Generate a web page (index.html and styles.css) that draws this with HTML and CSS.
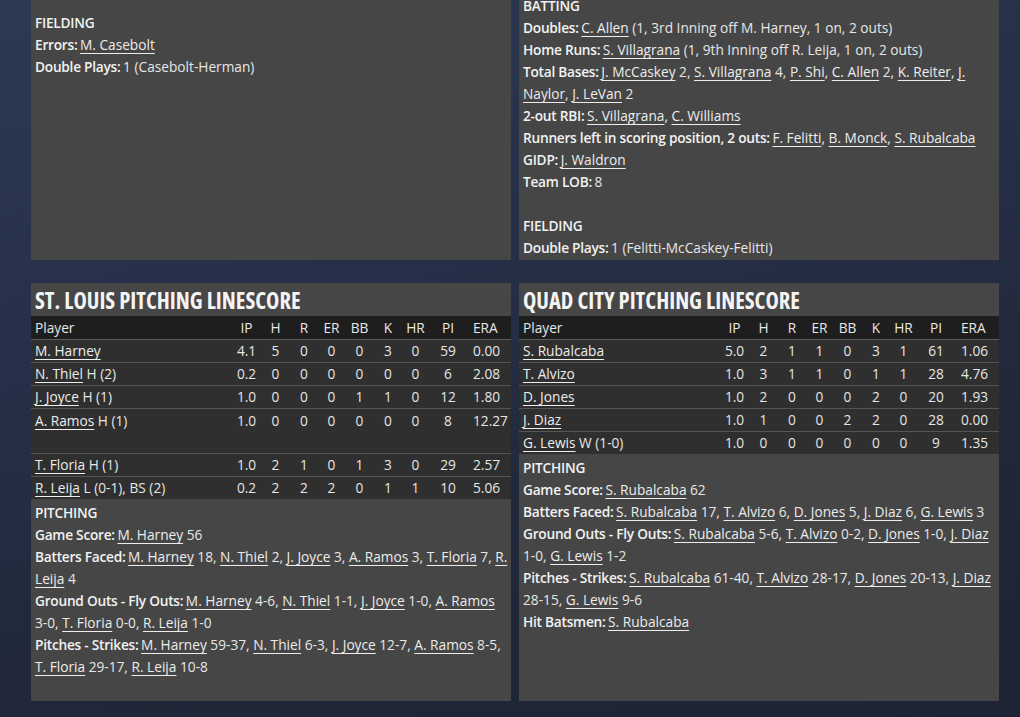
FILE: index.html
```html
<!DOCTYPE html>
<html>
<head>
<meta charset="utf-8">
<link rel="stylesheet" href="styles.css">
</head>
<body>
<div class="page">
  <div class="row top-row">
    <div class="panel text-panel left-top">
      <div class="sec-title">FIELDING</div>
      <div class="line"><b>Errors:</b> <a>M. Casebolt</a></div>
      <div class="line"><b>Double Plays:</b> 1 (Casebolt-Herman)</div>
    </div>
    <div class="panel text-panel right-top">
      <div class="sec-title">BATTING</div>
      <div class="line"><b>Doubles:</b> <a>C. Allen</a> (1, 3rd Inning off M. Harney, 1 on, 2 outs)</div>
      <div class="line"><b>Home Runs:</b> <a>S. Villagrana</a> (1, 9th Inning off R. Leija, 1 on, 2 outs)</div>
      <div class="line"><b>Total Bases:</b> <a>J. McCaskey</a> 2, <a>S. Villagrana</a> 4, <a>P. Shi</a>, <a>C. Allen</a> 2, <a>K. Reiter</a>, <a>J.<br>Naylor</a>, <a>J. LeVan</a> 2</div>
      <div class="line"><b>2-out RBI:</b> <a>S. Villagrana</a>, <a>C. Williams</a></div>
      <div class="line"><b>Runners left in scoring position, 2 outs:</b> <a>F. Felitti</a>, <a>B. Monck</a>, <a>S. Rubalcaba</a></div>
      <div class="line"><b>GIDP:</b> <a>J. Waldron</a></div>
      <div class="line"><b>Team LOB:</b> 8</div>
      <div class="blank"></div>
      <div class="sec-title">FIELDING</div>
      <div class="line"><b>Double Plays:</b> 1 (Felitti-McCaskey-Felitti)</div>
    </div>
  </div>

  <div class="row bottom-row">
    <div class="panel">
      <div class="panel-title">ST. LOUIS PITCHING LINESCORE</div>
      <table class="score">
        <thead>
          <tr><th class="player">Player</th><th>IP</th><th>H</th><th>R</th><th>ER</th><th>BB</th><th>K</th><th>HR</th><th>PI</th><th class="era">ERA</th></tr>
        </thead>
        <tbody>
          <tr><td class="player"><a>M. Harney</a></td><td>4.1</td><td>5</td><td>0</td><td>0</td><td>0</td><td>3</td><td>0</td><td>59</td><td class="era">0.00</td></tr>
          <tr><td class="player"><a>N. Thiel</a> H (2)</td><td>0.2</td><td>0</td><td>0</td><td>0</td><td>0</td><td>0</td><td>0</td><td>6</td><td class="era">2.08</td></tr>
          <tr><td class="player"><a>J. Joyce</a> H (1)</td><td>1.0</td><td>0</td><td>0</td><td>0</td><td>1</td><td>1</td><td>0</td><td>12</td><td class="era">1.80</td></tr>
          <tr class="tall"><td class="player"><a>A. Ramos</a> H (1)</td><td>1.0</td><td>0</td><td>0</td><td>0</td><td>0</td><td>0</td><td>0</td><td>8</td><td class="era">12.27</td></tr>
          <tr><td class="player"><a>T. Floria</a> H (1)</td><td>1.0</td><td>2</td><td>1</td><td>0</td><td>1</td><td>3</td><td>0</td><td>29</td><td class="era">2.57</td></tr>
          <tr><td class="player"><a>R. Leija</a> L (0-1), BS (2)</td><td>0.2</td><td>2</td><td>2</td><td>2</td><td>0</td><td>1</td><td>1</td><td>10</td><td class="era">5.06</td></tr>
        </tbody>
      </table>
      <div class="text-panel notes">
        <div class="sec-title">PITCHING</div>
        <div class="line"><b>Game Score:</b> <a>M. Harney</a> 56</div>
        <div class="line"><b>Batters Faced:</b> <a>M. Harney</a> 18, <a>N. Thiel</a> 2, <a>J. Joyce</a> 3, <a>A. Ramos</a> 3, <a>T. Floria</a> 7, <a>R.<br>Leija</a> 4</div>
        <div class="line"><b>Ground Outs - Fly Outs:</b> <a>M. Harney</a> 4-6, <a>N. Thiel</a> 1-1, <a>J. Joyce</a> 1-0, <a>A. Ramos</a><br>3-0, <a>T. Floria</a> 0-0, <a>R. Leija</a> 1-0</div>
        <div class="line"><b>Pitches - Strikes:</b> <a>M. Harney</a> 59-37, <a>N. Thiel</a> 6-3, <a>J. Joyce</a> 12-7, <a>A. Ramos</a> 8-5,<br><a>T. Floria</a> 29-17, <a>R. Leija</a> 10-8</div>
      </div>
    </div>

    <div class="panel">
      <div class="panel-title">QUAD CITY PITCHING LINESCORE</div>
      <table class="score">
        <thead>
          <tr><th class="player">Player</th><th>IP</th><th>H</th><th>R</th><th>ER</th><th>BB</th><th>K</th><th>HR</th><th>PI</th><th class="era">ERA</th></tr>
        </thead>
        <tbody>
          <tr><td class="player"><a>S. Rubalcaba</a></td><td>5.0</td><td>2</td><td>1</td><td>1</td><td>0</td><td>3</td><td>1</td><td>61</td><td class="era">1.06</td></tr>
          <tr><td class="player"><a>T. Alvizo</a></td><td>1.0</td><td>3</td><td>1</td><td>1</td><td>0</td><td>1</td><td>1</td><td>28</td><td class="era">4.76</td></tr>
          <tr><td class="player"><a>D. Jones</a></td><td>1.0</td><td>2</td><td>0</td><td>0</td><td>0</td><td>2</td><td>0</td><td>20</td><td class="era">1.93</td></tr>
          <tr><td class="player"><a>J. Diaz</a></td><td>1.0</td><td>1</td><td>0</td><td>0</td><td>2</td><td>2</td><td>0</td><td>28</td><td class="era">0.00</td></tr>
          <tr><td class="player"><a>G. Lewis</a> W (1-0)</td><td>1.0</td><td>0</td><td>0</td><td>0</td><td>0</td><td>0</td><td>0</td><td>9</td><td class="era">1.35</td></tr>
        </tbody>
      </table>
      <div class="text-panel notes">
        <div class="sec-title">PITCHING</div>
        <div class="line"><b>Game Score:</b> <a>S. Rubalcaba</a> 62</div>
        <div class="line"><b>Batters Faced:</b> <a>S. Rubalcaba</a> 17, <a>T. Alvizo</a> 6, <a>D. Jones</a> 5, <a>J. Diaz</a> 6, <a>G. Lewis</a> 3</div>
        <div class="line"><b>Ground Outs - Fly Outs:</b> <a>S. Rubalcaba</a> 5-6, <a>T. Alvizo</a> 0-2, <a>D. Jones</a> 1-0, <a>J. Diaz</a><br>1-0, <a>G. Lewis</a> 1-2</div>
        <div class="line"><b>Pitches - Strikes:</b> <a>S. Rubalcaba</a> 61-40, <a>T. Alvizo</a> 28-17, <a>D. Jones</a> 20-13, <a>J. Diaz</a><br>28-15, <a>G. Lewis</a> 9-6</div>
        <div class="line"><b>Hit Batsmen:</b> <a>S. Rubalcaba</a></div>
      </div>
    </div>
  </div>
</div>
</body>
</html>
```

FILE: styles.css
```css
* { box-sizing: border-box; }
html, body { margin: 0; padding: 0; }
body {
  width: 1020px;
  height: 717px;
  overflow: hidden;
  background: linear-gradient(165deg, #2d3852 0%, #263049 35%, #202839 70%, #1d2332 100%);
  font-family: "Open Sans", "Noto Sans", sans-serif;
  font-size: 13.7px;
  color: #e6e6e6;
}
.page {
  display: flex;
  flex-direction: column;
  gap: 23px;
  padding: 0 21px 0 31px;
  margin-top: -9px;
}
.row {
  display: grid;
  grid-template-columns: 480px 480px;
  gap: 8px;
}
.panel {
  background: #464646;
}
.text-panel {
  padding: 4px 4px 1px 4px;
  line-height: 22px;
}
.left-top { padding-top: 21px; }
.line { white-space: nowrap; }
.line b, .sec-title { font-weight: 600; letter-spacing: -0.25px; color: #f2f2f2; }
.line b { margin-right: -1px; }
.blank { height: 22px; }
a {
  color: #ededed;
  text-decoration: underline;
  text-underline-offset: 3px;
  text-decoration-thickness: 1px;
}
.bottom-row .panel { height: 418px; }
.panel-title {
  height: 33px;
  padding: 2px 4px 0;
  font-size: 22.5px;
  font-weight: 700;
  font-stretch: 80%;
  line-height: 31px;
  color: #f4f4f4;
}
.score {
  width: 480px;
  border-collapse: collapse;
  table-layout: fixed;
}
.score th, .score td {
  height: 23px;
  padding: 0;
  text-align: center;
  font-weight: 400;
  white-space: nowrap;
  vertical-align: middle;
}
.score thead tr { background: #1e1e1e; }
.score th { height: 23px; color: #e8e8e8; }
.score tbody tr { background: #2f2f2f; border-top: 1px solid #555555; }
.score tbody tr:first-child { border-top: 1px solid #5a5a5a; }
.score .player { text-align: left; padding-left: 4px; width: 201px; }
.score th:nth-child(2), .score td:nth-child(2) { width: 29px; }
.score th:nth-child(3), .score td:nth-child(3) { width: 29px; }
.score th:nth-child(4), .score td:nth-child(4) { width: 28px; }
.score th:nth-child(5), .score td:nth-child(5) { width: 27px; }
.score th:nth-child(6), .score td:nth-child(6) { width: 29px; }
.score th:nth-child(7), .score td:nth-child(7) { width: 28px; }
.score th:nth-child(8), .score td:nth-child(8) { width: 27px; }
.score th:nth-child(9), .score td:nth-child(9) { width: 38px; }
.score .era { text-align: left; padding-left: 6px; width: 44px; }
.score tr.tall td { height: 45px; vertical-align: top; padding-top: 2px; }
.score tr.tall td.player { padding-left: 4px; }
.notes { padding-top: 3px; }
```
